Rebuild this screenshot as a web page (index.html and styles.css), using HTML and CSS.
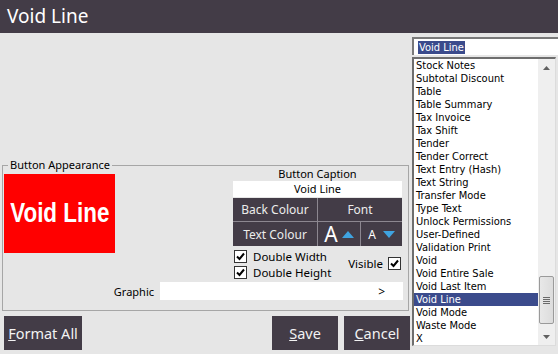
FILE: index.html
```html
<!DOCTYPE html>
<html>
<head>
<meta charset="utf-8">
<link rel="stylesheet" href="styles.css">
</head>
<body>
<div class="window">
  <header class="titlebar">Void Line</header>
  <div class="main">
    <div class="left">
      <div class="group">
        <span class="legend">Button Appearance</span>
        <div class="group-top">
          <div class="preview"><span class="preview-text">Void Line</span></div>
          <div class="caption-col">
            <div class="caption-label">Button Caption</div>
            <div class="caption-input">Void Line</div>
            <div class="caption-grid">
              <div class="cell">Back Colour</div>
              <div class="cell span2">Font</div>
              <div class="cell">Text Colour</div>
              <div class="cell font-cell"><span class="a-big">A</span><svg class="tri" width="12" height="7" viewBox="0 0 12 7"><polygon points="0,7 12,7 6,0" fill="#3fa3e0"/></svg></div>
              <div class="cell font-cell"><span class="a-small">A</span><svg class="tri" width="12" height="7" viewBox="0 0 12 7"><polygon points="0,0 12,0 6,7" fill="#3fa3e0"/></svg></div>
            </div>
            <div class="checks">
              <div class="check-col">
                <div class="check"><span class="box"><svg width="9" height="9" viewBox="0 0 9 9"><path d="M1 4.5 L3.5 7 L8 1.5" stroke="#000" stroke-width="2" fill="none"/></svg></span>Double Width</div>
                <div class="check"><span class="box"><svg width="9" height="9" viewBox="0 0 9 9"><path d="M1 4.5 L3.5 7 L8 1.5" stroke="#000" stroke-width="2" fill="none"/></svg></span>Double Height</div>
              </div>
              <div class="check visible">Visible<span class="box"><svg width="9" height="9" viewBox="0 0 9 9"><path d="M1 4.5 L3.5 7 L8 1.5" stroke="#000" stroke-width="2" fill="none"/></svg></span></div>
            </div>
          </div>
        </div>
        <div class="graphic-row">
          <span class="graphic-label">Graphic</span>
          <div class="graphic-input"><span class="gt">&gt;</span></div>
        </div>
      </div>
      <div class="actions">
        <button class="btn"><u>F</u>ormat All</button>
        <span class="spacer"></span>
        <button class="btn btn-save"><u>S</u>ave</button>
        <button class="btn btn-cancel"><u>C</u>ancel</button>
      </div>
    </div>
    <div class="right">
      <div class="search"><span class="sel">Void Line</span></div>
      <div class="list">
        <ul class="items">
          <li>Stock Notes</li>
          <li>Subtotal Discount</li>
          <li>Table</li>
          <li>Table Summary</li>
          <li>Tax Invoice</li>
          <li>Tax Shift</li>
          <li>Tender</li>
          <li>Tender Correct</li>
          <li>Text Entry (Hash)</li>
          <li>Text String</li>
          <li>Transfer Mode</li>
          <li>Type Text</li>
          <li>Unlock Permissions</li>
          <li>User-Defined</li>
          <li>Validation Print</li>
          <li>Void</li>
          <li>Void Entire Sale</li>
          <li>Void Last Item</li>
          <li class="selected">Void Line</li>
          <li>Void Mode</li>
          <li>Waste Mode</li>
          <li>X</li>
        </ul>
        <div class="scrollbar">
          <div class="arrow"><svg width="7" height="4" viewBox="0 0 7 4"><polygon points="0,4 7,4 3.5,0" fill="#606060"/></svg></div>
          <div class="track">
            <div class="thumb"><span class="grip"></span><span class="grip"></span><span class="grip"></span><span class="grip"></span></div>
          </div>
          <div class="arrow"><svg width="7" height="4" viewBox="0 0 7 4"><polygon points="0,0 7,0 3.5,4" fill="#606060"/></svg></div>
        </div>
      </div>
    </div>
  </div>
</div>
</body>
</html>
```
FILE: styles.css
```css
* { box-sizing: border-box; }
html, body { margin: 0; padding: 0; }
body {
  width: 558px;
  height: 354px;
  overflow: hidden;
  background: #e6e6e6;
  font-family: "Noto Sans", "Open Sans", sans-serif;
  color: #000;
}
.window { display: flex; flex-direction: column; height: 354px; }
.titlebar {
  height: 33px;
  flex: none;
  background: #433c47;
  color: #fff;
  font-size: 19px;
  line-height: 33px;
  padding-left: 7px;
}
.main { flex: 1; display: flex; min-height: 0; }
.left {
  width: 410px;
  flex: none;
  display: flex;
  flex-direction: column;
  justify-content: flex-end;
  padding-bottom: 4px;
}
.group {
  position: relative;
  margin-left: 2px;
  width: 407px;
  height: 146px;
  border: 1px solid #a6a6a6;
  display: flex;
  flex-direction: column;
}
.legend {
  position: absolute;
  top: -9px;
  left: 5px;
  padding: 0 2px;
  background: #e6e6e6;
  font-size: 11px;
  line-height: 16px;
}
.group-top { height: 116px; display: flex; }
.preview {
  margin: 8px 0 0 1px;
  width: 111px;
  height: 79px;
  flex: none;
  background: #ff0000;
  display: flex;
  align-items: center;
  justify-content: center;
  overflow: hidden;
}
.preview-text {
  color: #fff;
  font-family: "Liberation Sans", "Arial", sans-serif;
  font-weight: bold;
  font-size: 27px;
  white-space: nowrap;
  display: inline-block;
  transform: scaleX(0.83);
}
.caption-col { margin-left: auto; margin-right: 6px; width: 169px; display: flex; flex-direction: column; }
.caption-label { text-align: center; font-size: 11px; line-height: 15px; }
.caption-input {
  background: #fff;
  height: 16px;
  text-align: center;
  font-size: 11px;
  line-height: 16px;
}
.caption-grid {
  margin-top: 1px;
  display: grid;
  grid-template-columns: 84px 42px 41px;
  grid-template-rows: 23px 24px;
  gap: 1px;
  background: #8c8790;
}
.cell {
  background: #433c47;
  color: #ececec;
  font-size: 12px;
  display: flex;
  align-items: center;
  justify-content: center;
}
.span2 { grid-column: span 2; }
.font-cell { gap: 4px; }
.a-big { font-size: 21px; line-height: 20px; color: #fff; }
.a-small { font-size: 12px; color: #fff; margin-right: 3px; }
.tri { display: block; }
.checks { display: flex; margin-top: 2px; }
.check-col { display: flex; flex-direction: column; }
.check {
  height: 16px;
  display: flex;
  align-items: center;
  font-size: 11.5px;
}
.box {
  width: 13px;
  height: 13px;
  background: #fff;
  border: 1px solid #333;
  margin: 0 6px 0 1px;
  display: flex;
  align-items: center;
  justify-content: center;
}
.visible { margin-left: auto; margin-top: 7px; }
.visible .box { margin: 0 1px 0 5px; }
.graphic-row { display: flex; align-items: center; height: 18px; }
.graphic-label { width: 151px; text-align: right; font-size: 11px; }
.graphic-input {
  margin-left: 6px;
  width: 243px;
  height: 18px;
  background: #fff;
  display: flex;
  align-items: center;
  justify-content: flex-end;
  padding-right: 18px;
  font-size: 12px;
}
.actions { display: flex; margin-top: 5px; height: 34px; }
.spacer { flex: 1; }
.btn {
  margin: 0;
  border: none;
  background: #433c47;
  color: #f2f2f2;
  font-family: "Noto Sans", "Open Sans", sans-serif;
  font-size: 14.5px;
  height: 34px;
  padding: 0;
  width: 78px;
  margin-left: 4px;
}
.btn-save { width: 66px; margin-left: 0; }
.btn-cancel { width: 66px; margin-left: 6px; }
.right { flex: 1; display: flex; flex-direction: column; padding-left: 2px; }
.search {
  margin-top: 4px;
  height: 18px;
  background: #fff;
  border-top: 2px solid #7a7a7a;
  border-left: 2px solid #7a7a7a;
  padding-left: 4px;
  display: flex;
  align-items: center;
  font-family: "DejaVu Sans Condensed", "DejaVu Sans", sans-serif;
  font-size: 11px;
}
.sel { background: #3b4b8c; color: #fff; line-height: 13px; padding: 0 1px; }
.list {
  margin-top: 2px;
  width: 144px;
  height: 289px;
  background: #fff;
  border-top: 2px solid #6e6e6e;
  border-left: 2px solid #6e6e6e;
  border-right: 1px solid #dcdcdc;
  border-bottom: 1px solid #dcdcdc;
  display: flex;
}
.items {
  list-style: none;
  margin: 0;
  padding: 0;
  flex: 1;
  font-family: "DejaVu Sans Condensed", "DejaVu Sans", sans-serif;
  font-size: 11px;
}
.items li { height: 13px; line-height: 13px; padding-left: 2px; white-space: nowrap; }
.items li.selected { background: #3b4b8c; color: #fff; }
.scrollbar {
  width: 17px;
  background: #efefef;
  display: flex;
  flex-direction: column;
}
.arrow { height: 17px; display: flex; align-items: center; justify-content: center; }
.track { flex: 1; display: flex; flex-direction: column; justify-content: flex-end; }
.thumb {
  height: 48px;
  margin: 0 1px 4px 1px;
  background: linear-gradient(to right, #e8e8e8, #dcdcdc);
  border: 1px solid #9a9a9a;
  border-radius: 2px;
  display: flex;
  flex-direction: column;
  align-items: center;
  justify-content: center;
  gap: 1px;
}
.grip { width: 7px; height: 1px; background: #6a6a6a; }
```
